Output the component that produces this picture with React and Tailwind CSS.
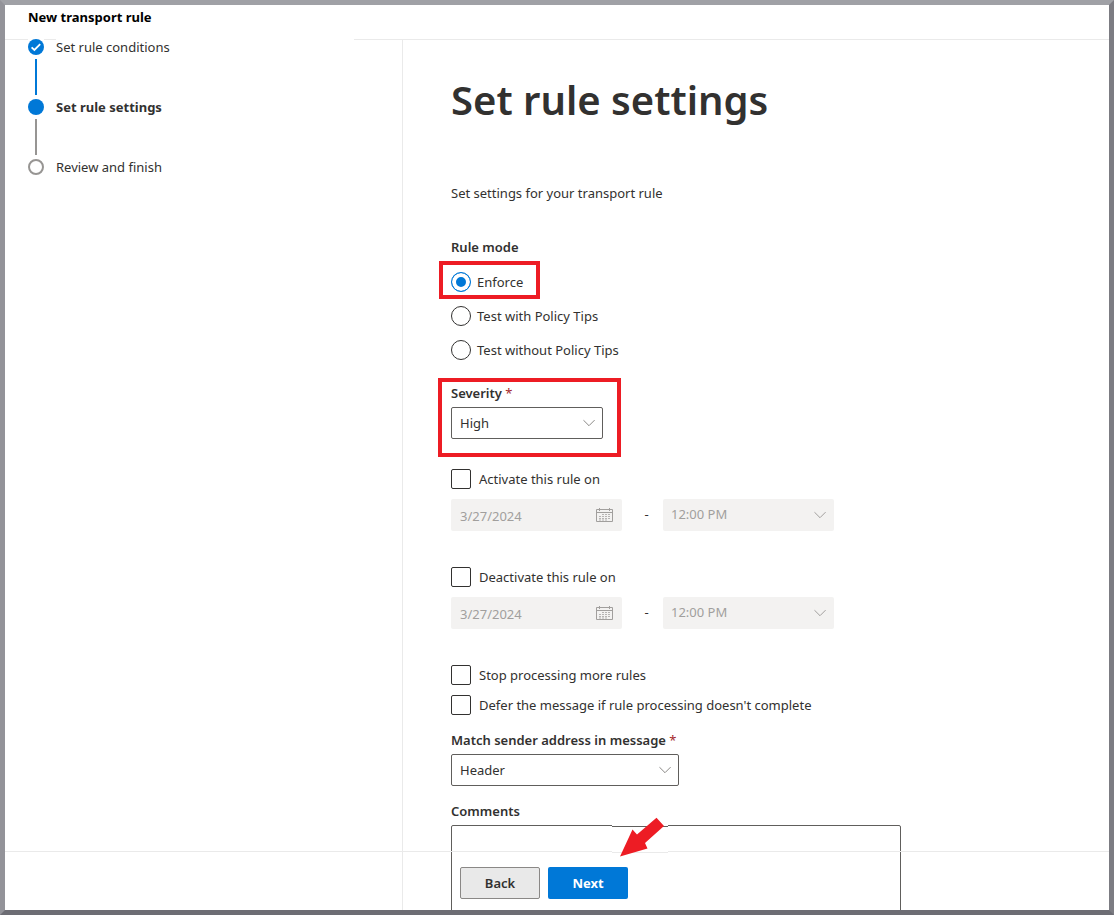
import { useState } from "react";

const steps = [
  { label: "Set rule conditions", state: "done" },
  { label: "Set rule settings", state: "current" },
  { label: "Review and finish", state: "todo" },
];

const modes = ["Enforce", "Test with Policy Tips", "Test without Policy Tips"];

function StepIcon({ state }) {
  return (
    <svg viewBox="0 0 16 16" className="block h-4 w-4" aria-hidden="true">
      {state === "todo" ? (
        <circle cx="8" cy="8" r="7" fill="#fff" stroke="#979593" strokeWidth="2" />
      ) : (
        <circle cx="8" cy="8" r="8" fill="#0078d7" />
      )}
      {state === "done" && (
        <path d="M3.6 8.3 6.4 11 12.2 5.2" fill="none" stroke="#fff" strokeWidth="1.8" />
      )}
    </svg>
  );
}

function Chevron({ className }) {
  return (
    <svg
      viewBox="0 0 12 7"
      className={"pointer-events-none absolute right-2 top-1/2 h-[7px] w-3 -translate-y-1/2 " + className}
      fill="none"
      stroke="currentColor"
      aria-hidden="true"
    >
      <path d="M.4.6 6 6.2 11.6.6" />
    </svg>
  );
}

function CalendarIcon() {
  return (
    <svg viewBox="0 0 17 16" className="h-4 w-[17px]" fill="none" stroke="currentColor" aria-hidden="true">
      <path d="M.5 2.5h16v12H.5zM.5 5.5h16M3.5 1v3M13.5 1v3" />
      <path d="M6 7.5h8M3 9.5h11M3 11.5h11M3 13h8" strokeDasharray="2 1" strokeOpacity=".75" />
    </svg>
  );
}

function Label({ htmlFor, required, children }) {
  return (
    <label htmlFor={htmlFor} className="block font-semibold leading-5">
      {children}
      {required && <span className="font-normal text-[#a4262c]"> *</span>}
    </label>
  );
}

function Select({ id, options }) {
  return (
    <div className="relative mt-1">
      <select
        id={id}
        className="h-8 w-full appearance-none rounded-xs border border-[#605e5c] bg-white px-2 pt-px"
      >
        {options.map((o) => (
          <option key={o}>{o}</option>
        ))}
      </select>
      <Chevron className="text-[#8a8886]" />
    </div>
  );
}

function Check({ id, children }) {
  return (
    <div className="flex h-5 items-center gap-2">
      <input
        id={id}
        type="checkbox"
        className="h-5 w-5 appearance-none rounded-xs border border-[#323130] bg-white checked:bg-[#0078d7]"
      />
      <label htmlFor={id} className="leading-5">{children}</label>
    </div>
  );
}

function Schedule({ id, children }) {
  return (
    <div>
      <Check id={id}>{children}</Check>
      <div className="mt-[10px] flex h-8 items-center text-[#a19f9d]">
        <div className="relative h-8 w-[171px]">
          <input
            type="text"
            disabled
            aria-label={children + " date"}
            defaultValue="3/27/2024"
            className="h-8 w-full rounded-xs bg-[#f3f2f1] px-[9px] pt-px"
          />
          <span className="absolute right-[9px] top-2">
            <CalendarIcon />
          </span>
        </div>
        <span className="w-[41px] pl-2 text-center text-[#323130]">-</span>
        <div className="relative h-8 w-[171px]">
          <select
            disabled
            aria-label={children + " time"}
            className="h-8 w-full appearance-none rounded-xs bg-[#f3f2f1] px-2 pb-px opacity-100"
          >
            <option>12:00 PM</option>
          </select>
          <Chevron className="text-[#a19f9d]" />
        </div>
      </div>
    </div>
  );
}

export default function App() {
  const [mode, setMode] = useState("Enforce");
  return (
    <div className="relative flex h-screen flex-col overflow-hidden border-[5px] border-t-[#a0a1a6] border-r-[#7c7c82] border-b-[#6d6d74] border-l-[#939399] bg-white font-['Noto_Sans','Open_Sans',sans-serif] text-[13px] text-[#323130]">
      <header className="h-[35px] shrink-0 border-b border-[#eaeaea] pl-[23px] pt-0.5">
        <h2 className="font-bold leading-5 text-black">New transport rule</h2>
      </header>

      <div className="flex min-h-0 flex-1">
        <nav aria-label="Steps" className="-mt-[3px] w-[397px] shrink-0 pl-[23px]">
          <ol>
            {steps.map((s, i) => (
              <li key={s.label} className="flex gap-3">
                <div className="flex w-4 flex-col items-center">
                  <span className="flex h-5 items-center bg-white">
                    <StepIcon state={s.state} />
                  </span>
                  {i < steps.length - 1 && (
                    <span className={"my-0.5 h-9 w-0.5 " + (s.state === "done" ? "bg-[#0078d7]" : "bg-[#979593]")} />
                  )}
                </div>
                <span
                  className={
                    "h-5 w-[298px] bg-white leading-5 " + (s.state === "current" ? "font-bold" : "")
                  }
                  aria-current={s.state === "current" ? "step" : undefined}
                >
                  {s.label}
                </span>
              </li>
            ))}
          </ol>
        </nav>

        <main className="flex-1 overflow-hidden border-l border-[#eaeaea] pl-12">
          <h1 className="pt-[30px] text-[40px] font-semibold leading-[60px]">Set rule settings</h1>
          <p className="mt-[53px] leading-5">Set settings for your transport rule</p>

          <fieldset className="mt-[34px]">
            <legend className="font-semibold leading-5">Rule mode</legend>
            <div className="mt-[15px] flex flex-col items-start gap-[14px]">
              {modes.map((m) => (
                <label key={m} className="relative flex h-5 items-center gap-[6px] leading-5">
                  <input
                    type="radio"
                    name="mode"
                    checked={mode === m}
                    onChange={() => setMode(m)}
                    className="h-5 w-5 appearance-none rounded-full border border-[#323130] bg-white checked:border-[#0078d7] checked:bg-[#0078d7] checked:shadow-[inset_0_0_0_4px_white]"
                  />
                  {m}
                  {m === "Enforce" && (
                    <span className="pointer-events-none absolute -left-3 -top-[11px] h-[38px] w-[101px] border-4 border-[#ed1c24]" />
                  )}
                </label>
              ))}
            </div>
          </fieldset>

          <div className="relative mt-[23px] w-[152px]">
            <Label htmlFor="severity" required>Severity</Label>
            <Select id="severity" options={["High", "Medium", "Low"]} />
            <span className="pointer-events-none absolute -left-[13px] -top-[5px] h-[79px] w-[183px] border-4 border-[#ed1c24]" />
          </div>

          <div className="mt-[30px] flex flex-col gap-9">
            <Schedule id="activate">Activate this rule on</Schedule>
            <Schedule id="deactivate">Deactivate this rule on</Schedule>
          </div>

          <div className="mt-9 flex flex-col gap-[10px]">
            <Check id="stop">Stop processing more rules</Check>
            <Check id="defer">Defer the message if rule processing doesn't complete</Check>
          </div>

          <div className="mt-[15px] w-[228px]">
            <Label htmlFor="match" required>Match sender address in message</Label>
            <Select id="match" options={["Header", "Envelope"]} />
          </div>

          <div className="mt-[15px] w-[450px]">
            <Label htmlFor="comments">Comments</Label>
            <textarea
              id="comments"
              className="mt-1 block h-32 w-full resize-none rounded-xs border border-[#605e5c] bg-transparent p-2"
            />
          </div>
        </main>
      </div>

      <footer className="absolute inset-x-0 bottom-0 border-t border-[#eaeaea] pb-[11px] pl-[455px] pt-[15px]">
        <div className="relative flex gap-2">
          <button type="button" className="h-8 w-20 rounded-xs border border-[#8a8886] bg-[#e9e9e9] pt-px font-semibold">
            Back
          </button>
          <button type="button" className="h-8 w-20 rounded-xs bg-[#0078d7] pt-px font-bold text-white">
            Next
          </button>
          <svg
            viewBox="0 0 56 42"
            className="pointer-events-none absolute -top-[50px] left-[152px] h-[42px] w-14"
            aria-hidden="true"
          >
            <path d="M0 0h56v42H0z" fill="#fff" />
            <path d="M0 9.5h56" stroke="#605e5c" />
            <path d="M0 35.5h56" stroke="#eaeaea" />
            <path d="M8 39.5 20.5 12.5 25 17.500 44.500.8 52 9 33 26 35.500 31.500Z" fill="#ed1c24" />
          </svg>
        </div>
      </footer>
    </div>
  );
}
